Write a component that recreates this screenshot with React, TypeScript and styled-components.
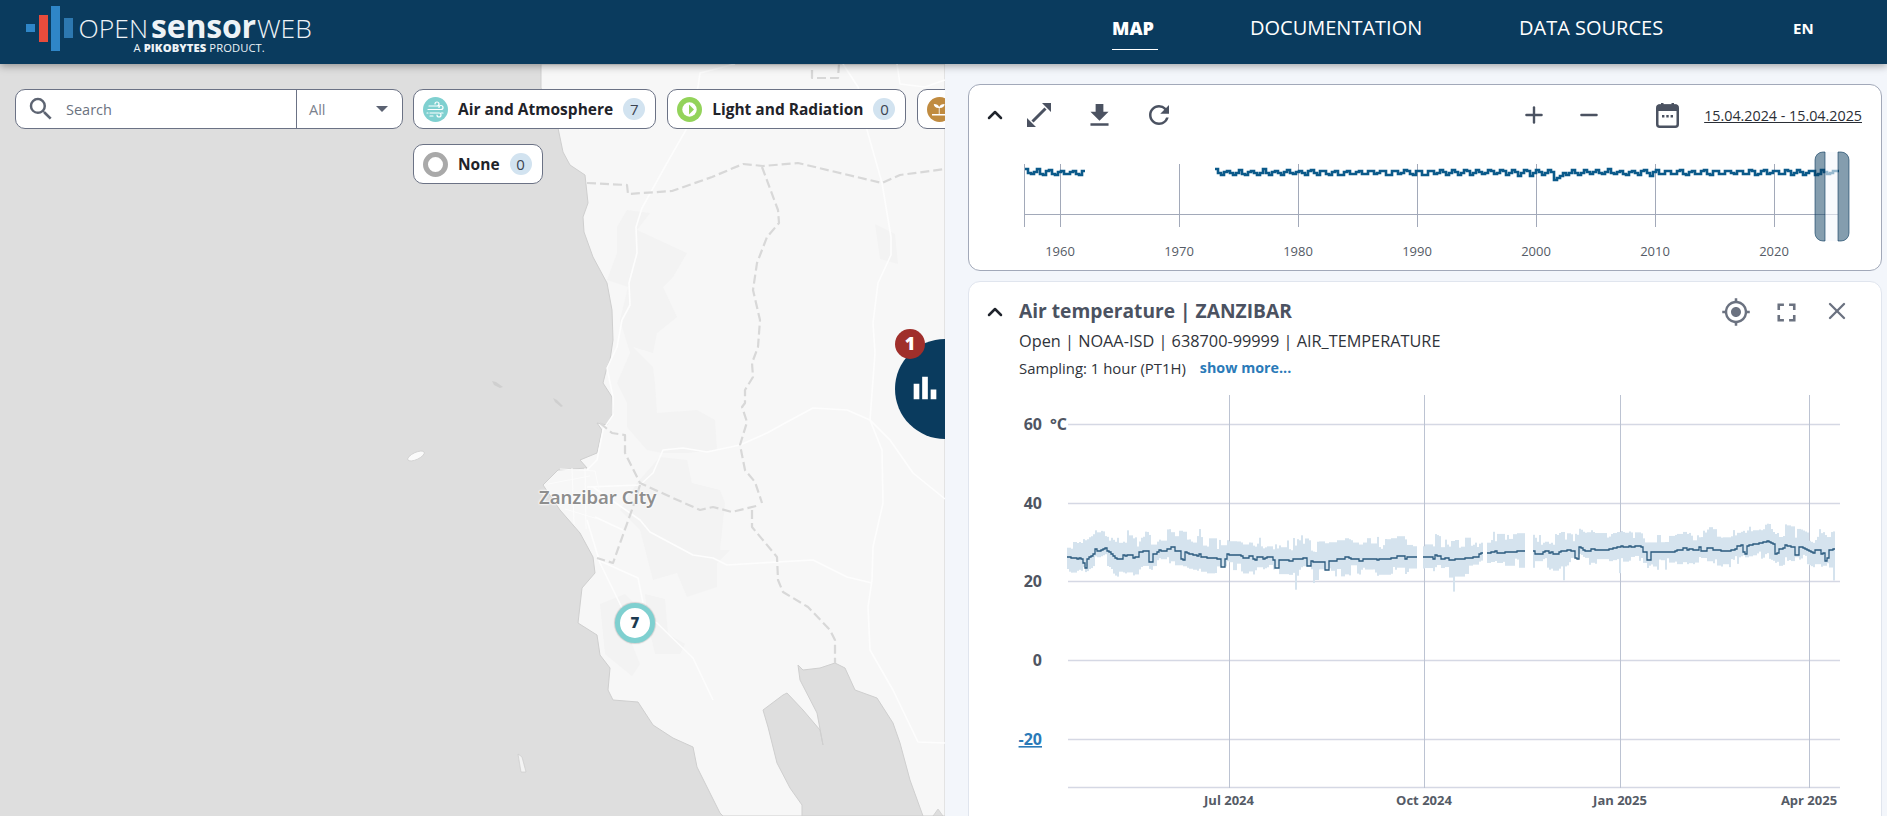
import React from 'react';
import styled, { createGlobalStyle } from 'styled-components';
import { ChevronUp, Plus, Minus, X } from 'lucide-react';
import { MdDownload, MdFullscreen, MdGpsFixed, MdRefresh, MdSearch, MdBarChart } from 'react-icons/md';

const FONT = `"Open Sans", "Noto Sans", sans-serif`;

const GlobalStyle = createGlobalStyle`
  html, body { margin: 0; padding: 0; height: 100%; overflow: hidden; }
  body { font-family: ${FONT}; background: #f3f6fb; }
  #root { height: 100%; }
`;

const Page = styled.div`
  display: flex;
  flex-direction: column;
  height: 816px;
  overflow: hidden;
`;

const Header = styled.header`
  position: relative;
  z-index: 5;
  flex: 0 0 64px;
  display: flex;
  align-items: center;
  background: #0a3b5e;
  box-shadow: 0 2px 8px rgba(0, 0, 0, 0.35);
`;

const Logo = styled.div`
  display: flex;
  align-items: flex-start;
  gap: 6px;
  margin-left: 26px;
  width: 1086px;
  height: 64px;
`;

const LogoBars = styled.div`
  display: flex;
  align-items: flex-start;
  gap: 3.5px;
  height: 45px;
  margin-top: 6px;
`;

const LogoBar = styled.span<{ $h: number; $c: string; $top: number }>`
  display: block;
  width: 9px;
  height: ${(p) => p.$h}px;
  background: ${(p) => p.$c};
  margin-top: ${(p) => p.$top}px;
`;

const LogoText = styled.div`
  color: #eef3f7;
`;

const LogoMain = styled.div`
  display: flex;
  align-items: baseline;
  height: 42px;
  line-height: 52px;
  font-size: 26.500px;
  font-weight: 300;
`;

const LogoBold = styled.span`
  font-size: 32px;
  font-weight: 700;
  margin: 0 1px 0 3px;
  letter-spacing: -0.2px;
`;

const LogoSub = styled.div`
  font-size: 11.200px;
  line-height: 12px;
  margin-left: 55px;
  letter-spacing: 0.1px;
  b { font-weight: 800; }
`;

const Nav = styled.nav`
  display: flex;
  flex: 1;
  align-items: center;
  height: 64px;
`;

const NavItem = styled.a<{ $active?: boolean; $w: number }>`
  position: relative;
  width: ${(p) => p.$w}px;
  color: #fff;
  font-size: ${(p) => (p.$active ? 18 : 20)}px;
  font-weight: ${(p) => (p.$active ? 800 : 500)};
  line-height: 56px;
  height: 64px;
  white-space: nowrap;
  &::after {
    content: '';
    display: ${(p) => (p.$active ? 'block' : 'none')};
    position: absolute;
    left: 0;
    top: 49px;
    width: 46px;
    height: 1px;
    background: #fff;
  }
`;

const Lang = styled.span`
  color: #fff;
  font-size: 15px;
  font-weight: 700;
  line-height: 56px;
  height: 64px;
`;

const Body = styled.div`
  display: flex;
  flex: 1;
  min-height: 0;
`;

const MapPane = styled.main`
  position: relative;
  flex: 0 0 945px;
  overflow: hidden;
  background: #dedede;
`;

const MapSvg = styled.svg`
  position: absolute;
  left: 0;
  top: 0;
`;

const Toolbar = styled.div`
  position: absolute;
  left: 15px;
  top: 25px;
  display: flex;
  align-items: flex-start;
  gap: 10px;
`;

const SearchBox = styled.div`
  flex: 0 0 388px;
  box-sizing: border-box;
  display: flex;
  align-items: center;
  height: 40px;
  background: #fff;
  border: 1px solid #6b7285;
  border-radius: 10px;
`;

const SearchField = styled.div`
  flex: 0 0 281px;
  box-sizing: border-box;
  display: flex;
  align-items: center;
  gap: 10px;
  padding-left: 10px;
  color: #6b7280;
  font-size: 14.500px;
  height: 100%;
  border-right: 1px solid #6b7285;
  svg { color: #5d6472; }
`;

const SelectField = styled.div`
  flex: 1;
  display: flex;
  align-items: center;
  justify-content: space-between;
  padding: 0 14px 0 12px;
  color: #7b818d;
  font-size: 14.500px;
`;

const Caret = styled.span`
  width: 0;
  height: 0;
  border-left: 6px solid transparent;
  border-right: 6px solid transparent;
  border-top: 6px solid #5b6272;
`;

const Chips = styled.div`
  display: flex;
  flex-wrap: wrap;
  gap: 15px 11px;
  width: 800px;
`;

const Chip = styled.div`
  box-sizing: border-box;
  display: flex;
  align-items: center;
  height: 40px;
  padding: 0 10px 0 9px;
  gap: 10px;
  background: #fff;
  border: 1px solid #6b7285;
  border-radius: 10px;
  color: #1f2329;
  font-size: 15.500px;
  font-weight: 700;
  white-space: nowrap;
`;

const ClippedChip = styled(Chip)`
  width: 240px;
`;

const ChipBadge = styled.span`
  display: flex;
  align-items: center;
  justify-content: center;
  width: 22px;
  height: 22px;
  border-radius: 50%;
  background: #d2e3f0;
  color: #3c4350;
  font-size: 15px;
  font-weight: 400;
`;

const CityLabel = styled.span`
  position: absolute;
  left: 539px;
  top: 421px;
  color: #8e8e8e;
  font-family: 'Noto Sans', sans-serif;
  font-size: 18.500px;
  font-weight: 600;
  line-height: 24px;
  text-shadow: 0 0 2px #fff, 0 0 2px #fff, 0 0 3px #fff;
`;

const Cluster = styled.div`
  position: absolute;
  left: 895px;
  top: 275px;
  width: 100px;
  height: 100px;
  border-radius: 50%;
  background: #0a3b5e;
  color: #fff;
  svg { position: absolute; left: 13px; top: 32px; }
`;

const ClusterCount = styled.span`
  position: absolute;
  left: 0;
  top: -10px;
  width: 30px;
  height: 30px;
  border-radius: 50%;
  background: #a02f2b;
  color: #fff;
  font-size: 18px;
  font-weight: 800;
  line-height: 29px;
  text-align: center;
`;

const Marker = styled.div`
  position: absolute;
  left: 615px;
  top: 539px;
  box-sizing: border-box;
  width: 40px;
  height: 40px;
  border-radius: 50%;
  background: #fff;
  border: 5px solid #7fd0d0;
  box-shadow: 0 0 1px 1px rgba(0, 0, 0, 0.15);
  color: #1c3a50;
  font-size: 15px;
  font-weight: 800;
  line-height: 29px;
  text-align: center;
`;

const SidePanel = styled.aside`
  flex: 1;
  display: flex;
  flex-direction: column;
  gap: 10px;
  padding: 20px 5px 0 23px;
  min-width: 0;
  background: #f3f6fb;
`;

const Card = styled.section<{ $strong?: boolean }>`
  box-sizing: border-box;
  background: #fff;
  border: 1px solid ${(p) => (p.$strong ? '#a2a9b9' : '#e0e5ee')};
  border-radius: 12px;
`;

const TimelineCard = styled(Card)`
  flex: 0 0 187px;
  height: 187px;
`;

const DetailCard = styled(Card)`
  flex: 1;
  min-height: 560px;
`;

const ToolRow = styled.div`
  display: flex;
  align-items: center;
  justify-content: space-between;
  height: 40px;
  margin-top: 10px;
  padding: 0 19px 0 14px;
  color: #4b5261;
  svg { display: block; }
`;

const ToolGroup = styled.div`
  display: flex;
  align-items: center;
`;

const Chevron = styled(ChevronUp)`
  color: #20242c;
  flex: none;
`;

const ToolIcon = styled.span<{ $ml: number; $w: number }>`
  display: flex;
  justify-content: center;
  flex: 0 0 ${(p) => p.$w}px;
  margin-left: ${(p) => p.$ml}px;
`;

const DateRange = styled.span`
  margin-left: 22px;
  color: #2a2e35;
  font-size: 14.300px;
  text-decoration: underline;
  white-space: nowrap;
`;

const DetailHead = styled.div`
  box-sizing: border-box;
  display: flex;
  height: 104px;
  padding: 15px 0 0 14px;
`;

const HeadChevron = styled(Chevron)`
  margin-top: 3px;
`;

const HeadText = styled.div`
  flex: 1;
  margin-left: 12px;
`;

const Title = styled.h2`
  margin: 0;
  color: #4b5261;
  font-size: 19.200px;
  font-weight: 700;
  line-height: 28px;
  white-space: nowrap;
`;

const Meta = styled.div`
  color: #2f333a;
  font-size: 16.300px;
  line-height: 22px;
  margin-top: 5px;
  white-space: nowrap;
`;

const Sampling = styled.div`
  display: flex;
  gap: 14px;
  color: #2f333a;
  font-size: 14.900px;
  line-height: 20px;
  margin-top: 6px;
  white-space: nowrap;
`;

const ShowMore = styled.a`
  color: #2a7ab8;
  font-size: 14.300px;
  font-weight: 700;
`;

const HeadIcons = styled.div`
  display: flex;
  align-items: flex-start;
  color: #6b7280;
`;

const HeadIcon = styled.span<{ $w: number; $mr: number }>`
  display: flex;
  justify-content: center;
  width: ${(p) => p.$w}px;
  margin-right: ${(p) => p.$mr}px;
`;

const ChartSvg = styled.svg`
  display: block;
  font-family: ${FONT};
`;

// small seeded random so the series stay the same between runs
const makeRandom = (seed: number) => () => {
  seed = (seed * 16807) % 2147483647;
  return seed / 2147483647;
};

const linePath = (pts: number[][]) => pts.map((p, i) => `${i ? 'L' : 'M'}${p[0]} ${p[1]}`).join('');

const LAND: number[][] = [
  [541, 0], [541, 24], [558, 64], [563, 88], [570, 101], [585, 111], [588, 139], [583, 153], [584, 168], [593, 193], [607, 219],
  [612, 246], [613, 276], [610, 296], [607, 303], [603, 319], [612, 333], [613, 349], [607, 361], [597, 359], [602, 366],
  [597, 389], [580, 396], [587, 404], [558, 406], [543, 421], [560, 446], [580, 469], [593, 493], [595, 509], [582, 524],
  [578, 559], [597, 571], [600, 591], [610, 604], [608, 626], [613, 636], [638, 638], [653, 661], [673, 674], [693, 683],
  [697, 703], [720, 749], [723, 752], [945, 752], [945, 0],
];

const BAY: number[][] = [
  [798, 601], [803, 606], [820, 604], [835, 599], [845, 604], [855, 626], [877, 634], [893, 659], [900, 679], [910, 716], [923, 752],
  [802, 752], [802, 741], [790, 724], [777, 699], [768, 663], [763, 646], [783, 631], [787, 629], [803, 646], [820, 666],
  [823, 681], [817, 649], [800, 616],
];

const PATCHES: number[][][] = [
  [[627, 146], [650, 149], [637, 166], [687, 189], [673, 213], [663, 223], [677, 253], [657, 269], [653, 289], [633, 283], [653, 303], [655, 319], [657, 349], [697, 346], [715, 356], [717, 386], [687, 389], [662, 389], [647, 386], [627, 363], [627, 339], [617, 319], [630, 289], [620, 256], [628, 223], [607, 216], [617, 189], [617, 163]],
  [[660, 393], [687, 396], [692, 419], [720, 426], [725, 439], [720, 486], [730, 486], [717, 499], [717, 523], [687, 533], [677, 509], [653, 516], [640, 466], [620, 446], [637, 419]],
  [[600, 540], [625, 530], [640, 545], [632, 580], [640, 600], [632, 612], [605, 590]],
  [[645, 530], [665, 535], [668, 570], [685, 580], [680, 590], [655, 590], [648, 560]],
  [[875, 160], [895, 170], [898, 200], [880, 195]],
];

const ROADS: number[][][] = [
  [[735, 0], [700, 9], [698, 23], [687, 64], [667, 99], [642, 144], [636, 163], [637, 189], [629, 219], [630, 241], [622, 256], [617, 283], [607, 304], [613, 333], [613, 351], [603, 366], [597, 396], [587, 406]],
  [[843, 0], [858, 23], [867, 66], [882, 119], [891, 173], [891, 191], [878, 219], [873, 259], [875, 289], [870, 356], [882, 386], [883, 439], [873, 483], [872, 516], [868, 543], [870, 586], [893, 626], [918, 678], [945, 679]],
  [[740, 381], [767, 369], [787, 358], [813, 344], [847, 346], [870, 356], [890, 376], [913, 409], [945, 435]],
  [[740, 381], [707, 388], [683, 384], [663, 386], [653, 409], [640, 421], [587, 423]],
  [[593, 423], [640, 456], [650, 468], [693, 491], [713, 494], [727, 501], [777, 498], [813, 496], [847, 513], [872, 519]],
  [[595, 453], [623, 466]],
  [[587, 456], [600, 499], [622, 544], [657, 559], [693, 594], [713, 636]],
  [[598, 496], [638, 514], [643, 539]],
  [[897, 0], [900, 20], [925, 23], [945, 16]],
];

const BORDERS: number[][][] = [
  [[587, 119], [627, 121], [628, 130], [672, 127], [712, 113], [743, 100], [763, 102], [798, 99], [882, 119], [900, 111], [945, 105]],
  [[762, 103], [778, 146], [779, 159], [767, 173], [757, 199], [753, 226], [760, 256], [758, 283], [752, 299], [753, 313], [745, 326], [745, 339], [742, 343], [747, 358], [740, 381], [745, 406], [755, 418], [762, 439]],
  [[600, 359], [612, 369], [625, 371], [625, 389], [640, 419], [673, 434], [700, 446], [713, 443], [732, 448], [760, 441]],
  [[752, 446], [752, 463], [777, 493], [778, 516], [783, 528], [808, 543], [830, 566], [835, 576], [835, 599]],
  [[640, 421], [633, 443], [613, 499], [597, 494]],
  [[812, 6], [812, 14], [838, 14], [839, 0]],
];

const pointsOf = (pts: number[][]) => pts.map((p) => p.join(',')).join(' ');

const MapArt = () => (
  <MapSvg width="945" height="752" viewBox="0 0 945 752">
    <polygon points={pointsOf(LAND)} fill="#f7f7f7" stroke="#cfcfcf" strokeWidth="1" />
    {PATCHES.map((p, i) => <polygon key={i} points={pointsOf(p)} fill="#f3f3f3" />)}
    <polygon points={pointsOf(BAY)} fill="#dedede" stroke="#cfcfcf" strokeWidth="1" />
    <polygon points="492,317 496,318 503,323 500,324 494,321" fill="#cfcfcf" />
    <polygon points="553,334 557,336 563,342 561,343 555,338" fill="#cfcfcf" />
    <ellipse cx="416" cy="392" rx="9" ry="3.5" fill="#fafafa" stroke="#ccc" strokeWidth="0.7" transform="rotate(-25 416 392)" />
    <polygon points="518,690 522,693 526,708 521,708" fill="#f4f4f4" stroke="#ccc" strokeWidth="0.7" />
    <polygon points="933,752 938,745 943,752" fill="#dedede" stroke="#ccc" strokeWidth="0.7" />
    <g fill="none" stroke="#fdfdfd" strokeWidth="1.600" strokeLinejoin="round">
      {ROADS.map((p, i) => <path key={i} d={linePath(p)} />)}
    </g>
    <g fill="none" stroke="#fcfcfc" strokeWidth="1">
      <path d="M560 405L595 407L600 430M548 420L590 412M556 432L596 440M565 445L598 455M572 404L574 460M585 404L586 465" />
    </g>
    <g fill="none" stroke="#d8d8d8" strokeWidth="2.200" strokeDasharray="9 4" strokeLinejoin="round">
      {BORDERS.map((p, i) => <path key={i} d={linePath(p)} />)}
    </g>
  </MapSvg>
);

const WindIcon = () => (
  <svg width="25" height="25" viewBox="0 0 25 25">
    <circle cx="12.500" cy="12.500" r="12.500" fill="#7fd0d0" />
    <g fill="none" stroke="#fff" strokeWidth="1.200" strokeLinecap="round">
      <path d="M6 9h8a2 2 0 1 0-2-2M5 12.500h13a2 2 0 1 0-2-2M7 16h9a2 2 0 1 1-2 2" />
      <path d="M18 16h2M4 16h1M7 19h3" />
    </g>
  </svg>
);

const LightIcon = () => (
  <svg width="25" height="25" viewBox="0 0 25 25">
    <circle cx="12.500" cy="12.500" r="12.500" fill="#93d35a" />
    <circle cx="12.500" cy="12.500" r="7.200" fill="#fff" />
    <path d="M12 7.500l5 5-5 5z" fill="#93d35a" />
  </svg>
);

const SproutIcon = () => (
  <svg width="25" height="25" viewBox="0 0 25 25">
    <circle cx="12.500" cy="12.500" r="12.500" fill="#c08b40" />
    <path d="M5 17h15v1.600H5zM11.800 17v-6c-3.500 0-5-1.800-5-4 3 0 4.700 1 5.400 3 .7-2 2.400-3 5.400-3 0 2.200-1.500 4-5 4v6z" fill="#fff" />
  </svg>
);

const NoneIcon = () => (
  <svg width="25" height="25" viewBox="0 0 25 25">
    <circle cx="12.500" cy="12.500" r="10" fill="#fff" stroke="#a9a9a9" strokeWidth="5" />
  </svg>
);

const ExpandIcon = () => (
  <svg width="24" height="24" viewBox="0 0 24 24" fill="currentColor">
    <path d="M15 0h9v9zM0 24v-9l9 9z" />
    <path d="M5.500 18.500L18.500 5.500" stroke="currentColor" strokeWidth="3" />
  </svg>
);

const CalendarIcon = () => (
  <svg width="23" height="25" viewBox="0 0 23 25">
    <rect x="1.250" y="2.500" width="20.500" height="21.250" rx="2.500" fill="#fff" stroke="currentColor" strokeWidth="2.500" />
    <path d="M1 3.500a2 2 0 0 1 2-2h17a2 2 0 0 1 2 2V8H1zM5 0h2.500v3H5zM15.500 0H18v3h-2.500z" fill="currentColor" />
    <path d="M6 12h2.400v2.400H6zM10.300 12h2.400v2.400h-2.400zM14.600 12H17v2.400h-2.400z" fill="currentColor" />
  </svg>
);

const TIMELINE_TICKS: [number, string][] = [
  [92, '1960'], [211, '1970'], [330, '1980'], [449, '1990'], [568, '2000'], [687, '2010'], [806, '2020'],
];

const stepSeries = (from: number, to: number, seed: number) => {
  const rnd = makeRandom(seed);
  const pts: number[][] = [];
  for (let x = from; x < to; x += 3) {
    const dip = x >= 585 && x < 594 ? 5 : 0;
    const y = Math.round(87.5 + 2.4 * Math.sin((x * Math.PI * 2) / 11.9) + rnd() * 1.6 - 0.8) + dip;
    pts.push([x, y], [x + 3, y]);
  }
  return pts;
};

const TimelineChart = () => {
  const a = stepSeries(57, 115, 77);
  const b = stepSeries(247, 870, 4242);
  return (
    <ChartSvg width="912" height="126" viewBox="1 50 912 126">
      <line x1="56" x2="870" y1="129.500" y2="129.500" stroke="#a2a9b9" />
      <line x1="56.500" x2="56.500" y1="79" y2="142" stroke="#a2a9b9" />
      {TIMELINE_TICKS.map(([x, t]) => (
        <g key={t}>
          <line x1={x + 0.5} x2={x + 0.5} y1="79" y2="142" stroke="#a2a9b9" />
          <text x={x} y="171" textAnchor="middle" fontSize="13" fill="#555b66">{t}</text>
        </g>
      ))}
      <path d={linePath(a)} fill="none" stroke="#0b5a8a" strokeWidth="2.600" />
      <path d={linePath(b)} fill="none" stroke="#0b5a8a" strokeWidth="2.600" />
      <rect x="857" y="67" width="13" height="89" fill="#f3f6fb" opacity="0.6" />
      <path d="M857 67h-2a8 8 0 0 0-8 8v73a8 8 0 0 0 8 8h2z" fill="#0a3b5e" fillOpacity="0.5" stroke="#0a3b5e" strokeOpacity="0.6" />
      <path d="M870 67h3a8 8 0 0 1 8 8v73a8 8 0 0 1-8 8h-3z" fill="#0a3b5e" fillOpacity="0.5" stroke="#0a3b5e" strokeOpacity="0.6" />
    </ChartSvg>
  );
};

const MEAN: number[][] = [
  [1067, 555], [1085, 558], [1095, 551], [1105, 547], [1115, 556], [1125, 558], [1150, 552], [1175, 549], [1200, 556], [1215, 556], [1245, 557],
  [1270, 559], [1300, 560], [1320, 561], [1345, 558], [1370, 560], [1395, 558], [1417, 557], [1424, 557], [1440, 558],
  [1470, 556], [1500, 553], [1525, 552], [1535, 552], [1550, 553], [1575, 548], [1600, 552], [1620, 547], [1650, 550], [1700, 549], [1730, 550],
  [1745, 545], [1765, 541], [1775, 547], [1800, 545], [1815, 552], [1834, 550],
];

const meanAt = (x: number) => {
  for (let i = 1; i < MEAN.length; i++) {
    if (x <= MEAN[i][0]) {
      const [x0, y0] = MEAN[i - 1];
      const [x1, y1] = MEAN[i];
      return y0 + ((y1 - y0) * (x - x0)) / (x1 - x0);
    }
  }
  return 550;
};

const GAPS = [[1417, 1422], [1483, 1487], [1525, 1533]];
const inGap = (x: number) => GAPS.some(([a, b]) => x >= a && x < b);

const buildSeries = () => {
  const rnd = makeRandom(90210);
  const bands: { x: number; top: number; bottom: number }[] = [];
  const lines: number[][][] = [];
  let cur: number[][] = [];
  let up = 15;
  let down = 12;
  let walk = 0;
  let dip = 0;
  for (let x = 1067; x < 1834; x += 2) {
    if (inGap(x)) {
      if (cur.length) lines.push(cur);
      cur = [];
      continue;
    }
    if (rnd() > 0.62) up = 9 + rnd() * 12;
    if (rnd() > 0.62) down = 6 + rnd() * 12;
    if (rnd() > 0.7) walk = (rnd() - 0.5) * 5;
    const spikeDown = rnd() > 0.98 ? 14 : 0;
    const spikeUp = rnd() > 0.98 ? 5 : 0;
    const m = Math.round(meanAt(x) + walk);
    bands.push({ x, top: m - up - spikeUp, bottom: m + down + spikeDown });
    if (dip > 0) dip -= 1;
    else if (rnd() > 0.97) dip = 2;
    const y = m + (dip > 0 ? 8 : 0);
    cur.push([x, y], [x + 2, y]);
  }
  if (cur.length) lines.push(cur);
  return { bands, lines };
};

const SERIES = buildSeries();

const Y_GRID = [424, 503, 581, 660, 739];
const Y_LABELS: [number, string][] = [[503, '40'], [581, '20'], [660, '0']];
const X_GRID: [number, string][] = [[1229, 'Jul 2024'], [1424, 'Oct 2024'], [1620, 'Jan 2025'], [1809, 'Apr 2025']];

const TemperatureChart = () => (
  <ChartSvg width="912" height="430" viewBox="969 386 912 430">
    {Y_GRID.map((y) => <line key={y} x1="1068" x2="1840" y1={y + 0.5} y2={y + 0.5} stroke="#d5d8e4" strokeWidth="1.300" />)}
    <line x1="1068" x2="1840" y1="787.500" y2="787.500" stroke="#d5d8e4" strokeWidth="1.300" />
    {X_GRID.map(([x, t]) => (
      <g key={t}>
        <line x1={x + 0.5} x2={x + 0.5} y1="395" y2="788" stroke="#bcc3d2" />
        <text x={x} y="805" textAnchor="middle" fontSize="13" fontWeight="700" fill="#555b66">{t}</text>
      </g>
    ))}
    {SERIES.bands.map((b) => <rect key={b.x} x={b.x} y={b.top} width="2" height={b.bottom - b.top} fill="#d5e3ee" />)}
    {SERIES.lines.map((l, i) => <path key={i} d={linePath(l)} fill="none" stroke="#2a5a7e" strokeWidth="1.300" />)}
    <text x="1042" y="430" textAnchor="end" fontSize="16" fontWeight="700" fill="#4f5562">60</text>
    <text x="1050" y="430" fontSize="16" fontWeight="700" fill="#4f5562">°C</text>
    {Y_LABELS.map(([y, t]) => (
      <text key={t} x="1042" y={y + 6} textAnchor="end" fontSize="16" fontWeight="700" fill="#4f5562">{t}</text>
    ))}
    <text x="1042" y="745" textAnchor="end" fontSize="16" fontWeight="700" fill="#2a7ab8" textDecoration="underline">-20</text>
  </ChartSvg>
);

const App: React.FC = () => (
  <Page>
    <GlobalStyle />
    <Header>
      <Logo>
        <LogoBars>
          <LogoBar $h={8} $c="#2f86c8" $top={18} />
          <LogoBar $h={27} $c="#e74c3c" $top={9} />
          <LogoBar $h={45} $c="#2f86c8" $top={0} />
          <LogoBar $h={20} $c="#2d78b0" $top={12} />
        </LogoBars>
        <LogoText>
          <LogoMain>OPEN<LogoBold>sensor</LogoBold>WEB</LogoMain>
          <LogoSub>A <b>PIKOBYTES</b> PRODUCT.</LogoSub>
        </LogoText>
      </Logo>
      <Nav>
        <NavItem $active $w={138}>MAP</NavItem>
        <NavItem $w={269}>DOCUMENTATION</NavItem>
        <NavItem $w={274}>DATA SOURCES</NavItem>
        <Lang>EN</Lang>
      </Nav>
    </Header>
    <Body>
      <MapPane>
        <MapArt />
        <CityLabel>Zanzibar City</CityLabel>
        <Marker>7</Marker>
        <Cluster>
          <MdBarChart size={34} />
          <ClusterCount>1</ClusterCount>
        </Cluster>
        <Toolbar>
          <SearchBox>
            <SearchField><MdSearch size={30} />Search</SearchField>
            <SelectField>All<Caret /></SelectField>
          </SearchBox>
          <Chips>
            <Chip><WindIcon />Air and Atmosphere<ChipBadge>7</ChipBadge></Chip>
            <Chip><LightIcon />Light and Radiation<ChipBadge>0</ChipBadge></Chip>
            <ClippedChip><SproutIcon /></ClippedChip>
            <Chip><NoneIcon />None<ChipBadge>0</ChipBadge></Chip>
          </Chips>
        </Toolbar>
      </MapPane>
      <SidePanel>
        <TimelineCard $strong>
          <ToolRow>
            <ToolGroup>
              <Chevron size={24} strokeWidth={2.5} />
              <ToolIcon $ml={18} $w={28}><ExpandIcon /></ToolIcon>
              <ToolIcon $ml={31} $w={31}><MdDownload size={31} /></ToolIcon>
              <ToolIcon $ml={29} $w={30}><MdRefresh size={30} /></ToolIcon>
            </ToolGroup>
            <ToolGroup>
              <ToolIcon $ml={0} $w={26}><Plus size={26} strokeWidth={2.2} /></ToolIcon>
              <ToolIcon $ml={29} $w={26}><Minus size={26} strokeWidth={2.2} /></ToolIcon>
              <ToolIcon $ml={50} $w={30}><CalendarIcon /></ToolIcon>
              <DateRange>15.04.2024 - 15.04.2025</DateRange>
            </ToolGroup>
          </ToolRow>
          <TimelineChart />
        </TimelineCard>
        <DetailCard>
          <DetailHead>
            <HeadChevron size={24} strokeWidth={2.5} />
            <HeadText>
              <Title>Air temperature | ZANZIBAR</Title>
              <Meta>Open | NOAA-ISD | 638700-99999 | AIR_TEMPERATURE</Meta>
              <Sampling>Sampling: 1 hour (PT1H)<ShowMore>show more...</ShowMore></Sampling>
            </HeadText>
            <HeadIcons>
              <HeadIcon $w={30} $mr={20}><MdGpsFixed size={30} /></HeadIcon>
              <HeadIcon $w={31} $mr={20}><MdFullscreen size={31} /></HeadIcon>
              <HeadIcon $w={30} $mr={29}><X size={28} strokeWidth={2} /></HeadIcon>
            </HeadIcons>
          </DetailHead>
          <TemperatureChart />
        </DetailCard>
      </SidePanel>
    </Body>
  </Page>
);

export default App;
